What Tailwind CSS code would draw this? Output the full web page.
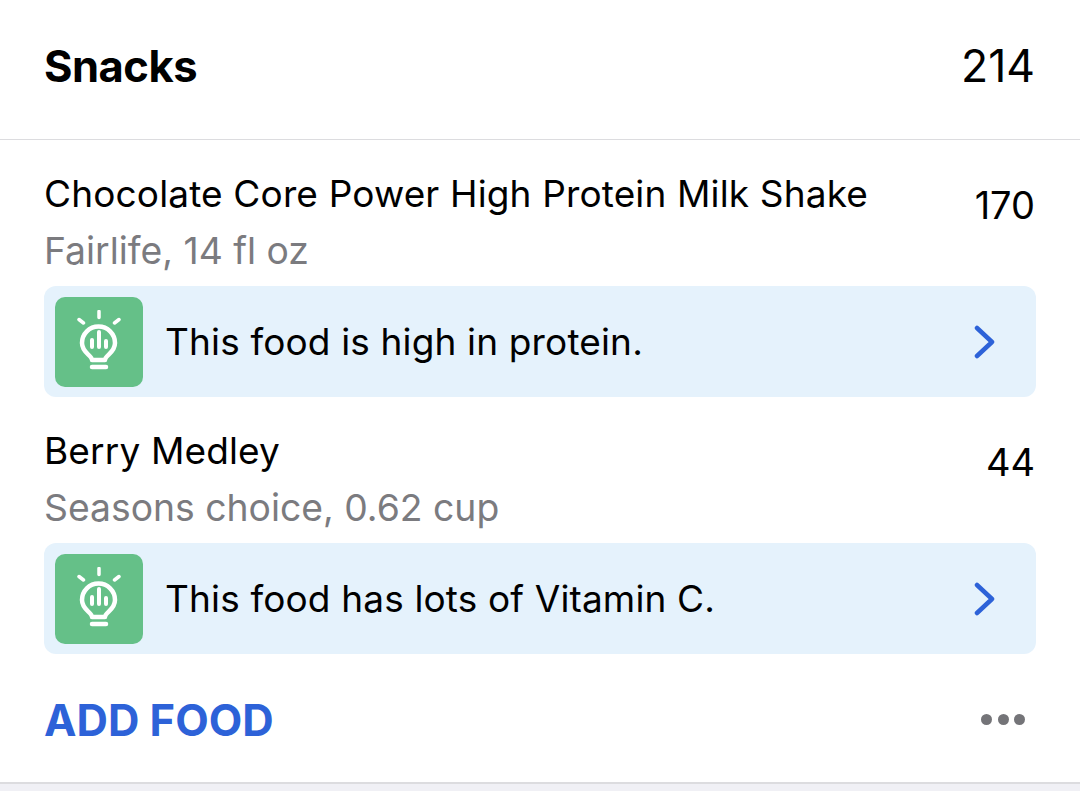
<!doctype html>
<html lang="en">
  <head>
    <meta charset="UTF-8">
    <title>Snacks</title>
    <script src="https://cdn.jsdelivr.net/npm/@tailwindcss/browser@4"></script>
  </head>
  <body class="bg-white w-[1080px] h-[791px] overflow-hidden font-['Inter','Liberation_Sans',sans-serif] text-black">
    <!-- Header -->
    <div class="h-[140px] flex justify-between items-center pl-[44px] pr-[45px] border-b border-[#dcdcdf] pb-[6px]">
      <h1 class="text-[43.5px] font-bold tracking-[-0.5px]">Snacks</h1>
      <span class="text-[44.5px]">214</span>
    </div>

    <!-- Chocolate shake -->
    <div class="h-[146px] pl-[44px] pr-[45px] flex justify-between">
      <div class="pt-[30px]">
        <p class="text-[37px] leading-[47px] tracking-[0.15px]">Chocolate Core Power High Protein Milk Shake</p>
        <p class="text-[37.3px] leading-[47px] mt-[10px] text-[#7b7b7f]">Fairlife, 14 fl oz</p>
      </div>
      <span class="text-[38px] mt-[42px] leading-[47px]">170</span>
    </div>
    <div class="mx-[44px] h-[111px] rounded-[12px] bg-[#e5f2fc] flex items-center pl-[11px] pr-[40px]">
      <div class="w-[88px] h-[90px] rounded-[10px] bg-[#65c088] flex items-center justify-center">
        <svg width="50" height="64" viewBox="0 0 50 64" fill="none" stroke="#fff" stroke-linecap="round">
          <path d="M25 1.5v6M5 9.5l4.500 3.500M45 9.500l-4.500 3.500" stroke-width="3.500"/>
          <path d="M18 50c0-5-10-7-10-17a16.500 16.500 0 0 1 33 0c0 10-10 12-10 17z" stroke-width="4.500" stroke-linejoin="round"/>
          <path d="M25 22v15M18 30v7M32 31v6" stroke-width="4"/>
          <path d="M18 57h14" stroke-width="4.500"/>
        </svg>
      </div>
      <span class="ml-[22px] text-[37px] tracking-[0.15px] flex-1">This food is high in protein.</span>
      <svg width="22" height="34" viewBox="0 0 22 34" fill="none" stroke="#2d62d8" stroke-width="4.500" stroke-linecap="round" stroke-linejoin="round"><path d="M3 3l15 14L3 31"/></svg>
    </div>

    <!-- Berry medley -->
    <div class="h-[146px] pl-[44px] pr-[45px] flex justify-between">
      <div class="pt-[30px]">
        <p class="text-[37px] leading-[47px] tracking-[0.15px]">Berry Medley</p>
        <p class="text-[37.3px] leading-[47px] mt-[10px] text-[#7b7b7f]">Seasons choice, 0.62 cup</p>
      </div>
      <span class="text-[38px] mt-[42px] leading-[47px]">44</span>
    </div>
    <div class="mx-[44px] h-[111px] rounded-[12px] bg-[#e5f2fc] flex items-center pl-[11px] pr-[40px]">
      <div class="w-[88px] h-[90px] rounded-[10px] bg-[#65c088] flex items-center justify-center">
        <svg width="50" height="64" viewBox="0 0 50 64" fill="none" stroke="#fff" stroke-linecap="round">
          <path d="M25 1.5v6M5 9.5l4.500 3.500M45 9.500l-4.500 3.500" stroke-width="3.500"/>
          <path d="M18 50c0-5-10-7-10-17a16.500 16.500 0 0 1 33 0c0 10-10 12-10 17z" stroke-width="4.500" stroke-linejoin="round"/>
          <path d="M25 22v15M18 30v7M32 31v6" stroke-width="4"/>
          <path d="M18 57h14" stroke-width="4.500"/>
        </svg>
      </div>
      <span class="ml-[22px] text-[37px] tracking-[0.15px] flex-1">This food has lots of Vitamin C.</span>
      <svg width="22" height="34" viewBox="0 0 22 34" fill="none" stroke="#2d62d8" stroke-width="4.500" stroke-linecap="round" stroke-linejoin="round"><path d="M3 3l15 14L3 31"/></svg>
    </div>

    <!-- Footer -->
    <div class="h-[130px] pl-[44px] pr-[55px] flex justify-between items-center border-b-2 border-[#dcdcdf] pt-[2px]">
      <span class="text-[43.5px] font-bold text-[#2d62d8] pt-[3px]">ADD FOOD</span>
      <div class="flex gap-[5.5px]">
        <span class="w-[11px] h-[11px] rounded-full bg-[#747478]"></span>
        <span class="w-[11px] h-[11px] rounded-full bg-[#747478]"></span>
        <span class="w-[11px] h-[11px] rounded-full bg-[#747478]"></span>
      </div>
    </div>
    <div class="h-[10px] bg-[#f0f0f5]"></div>
  </body>
</html>
